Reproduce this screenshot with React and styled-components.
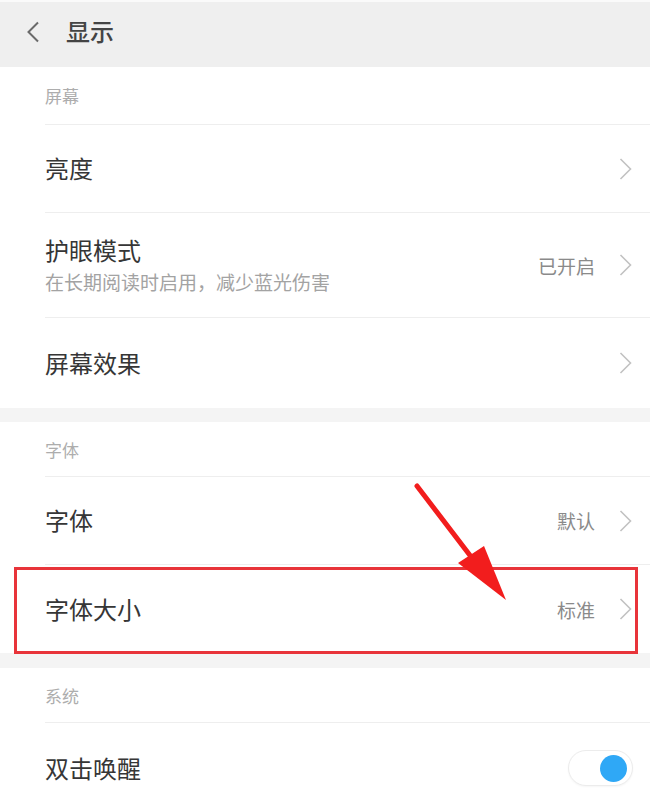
import React from "react"
import styled, { createGlobalStyle } from "styled-components"

const GlobalStyle = createGlobalStyle`
    html, body {
        margin: 0;
        padding: 0;
        background: #ffffff;
        overflow: hidden;
    }
    body {
        font-family: "Noto Sans CJK SC", "Noto Sans", sans-serif;
        color: #333333;
    }
`

const Page = styled.div`
    position: relative;
    width: 650px;
    height: 801px;
    overflow: hidden;
    background: #ffffff;
    border-top: 2px solid #fafafa;
    box-sizing: border-box;
`

const Header = styled.div`
    display: flex;
    align-items: center;
    height: 65px;
    background: #efefef;
    padding-left: 26px;
    padding-bottom: 6px;
    gap: 26px;
    box-sizing: border-box;
`

const Title = styled.div`
    font-size: 24px;
    font-weight: 500;
    color: #444444;
    line-height: 1;
    margin-top: -2px;
`

const Section = styled.div`
    background: #ffffff;
`

const Gap = styled.div`
    height: ${(p) => p.h || 14}px;
    background: #f4f4f4;
`

const SectionLabel = styled.div`
    display: flex;
    align-items: center;
    height: ${(p) => p.h || 55}px;
    margin-left: 45px;
    border-bottom: 1px solid #eeeeee;
    font-size: 17px;
    color: #adadad;
    box-sizing: border-box;
`

const Row = styled.div`
    display: flex;
    align-items: center;
    justify-content: space-between;
    height: ${(p) => p.h || 88}px;
    margin-left: 45px;
    padding-right: ${(p) => (p.toggle ? 17 : 18)}px;
    border-bottom: ${(p) => (p.last ? "none" : "1px solid #eeeeee")};
    box-sizing: border-box;
`

const TextCol = styled.div`
    display: flex;
    flex-direction: column;
    gap: 5px;
`

const ItemTitle = styled.div`
    font-size: 24px;
    color: #363636;
    line-height: 1.2;
`

const ItemSub = styled.div`
    font-size: 19px;
    color: #a3a3a3;
    line-height: 1.3;
`

const Right = styled.div`
    display: flex;
    align-items: center;
    gap: 24px;
`

const Value = styled.span`
    font-size: 19px;
    color: #8a8a8a;
`

const Toggle = styled.div`
    display: flex;
    align-items: center;
    justify-content: flex-end;
    width: 65px;
    height: 36px;
    padding: 0 5px;
    border-radius: 18px;
    border: 1px solid #ececec;
    background: #ffffff;
    box-sizing: border-box;
    box-shadow: 0 1px 2px rgba(0, 0, 0, 0.04);
`

const Knob = styled.div`
    width: 27px;
    height: 27px;
    border-radius: 50%;
    background: #2fa8f6;
`

const HighlightBox = styled.div`
    position: absolute;
    left: 14px;
    top: 565px;
    width: 624px;
    height: 87px;
    border: 3px solid #e8343a;
    box-sizing: border-box;
    pointer-events: none;
`

const ArrowLayer = styled.svg`
    position: absolute;
    left: 0;
    top: 0;
    pointer-events: none;
`

const Chevron = () => (
    <svg width="13" height="22" viewBox="0 0 13 22">
        <polyline points="1.5,1 11.5,11 1.5,21" fill="none" stroke="#c2c2c2" strokeWidth="1.6" />
    </svg>
)

const BackIcon = () => (
    <svg width="14" height="22" viewBox="0 0 14 22">
        <polyline points="12,1.5 2.5,11 12,20.5" fill="none" stroke="#6a6a6a" strokeWidth="2" />
    </svg>
)

const NavRow = ({ title, sub, value, h, last }) => (
    <Row h={h} last={last}>
        <TextCol>
            <ItemTitle>{title}</ItemTitle>
            {sub && <ItemSub>{sub}</ItemSub>}
        </TextCol>
        <Right>
            {value && <Value>{value}</Value>}
            <Chevron />
        </Right>
    </Row>
)

export default function App() {
    return (
        <>
            <GlobalStyle />
            <Page>
                <Header>
                    <BackIcon />
                    <Title>显示</Title>
                </Header>

                <Section>
                    <SectionLabel h={58}>屏幕</SectionLabel>
                    <NavRow title="亮度" h={88} />
                    <NavRow title="护眼模式" sub="在长期阅读时启用，减少蓝光伤害" value="已开启" h={105} />
                    <NavRow title="屏幕效果" h={90} last />
                </Section>
                <Gap h={14} />

                <Section>
                    <SectionLabel h={55}>字体</SectionLabel>
                    <NavRow title="字体" value="默认" h={88} />
                    <NavRow title="字体大小" value="标准" h={88} last />
                </Section>
                <Gap h={15} />

                <Section>
                    <SectionLabel h={55}>系统</SectionLabel>
                    <Row h={90} toggle last>
                        <ItemTitle>双击唤醒</ItemTitle>
                        <Toggle>
                            <Knob />
                        </Toggle>
                    </Row>
                </Section>

                <HighlightBox />
                <ArrowLayer width="650" height="801" viewBox="0 0 650 801">
                    <line x1="417" y1="484" x2="472" y2="556" stroke="#f21d1d" strokeWidth="5" strokeLinecap="round" />
                    <polygon points="458,561 484,544 506,598" fill="#f21d1d" />
                </ArrowLayer>
            </Page>
        </>
    )
}
